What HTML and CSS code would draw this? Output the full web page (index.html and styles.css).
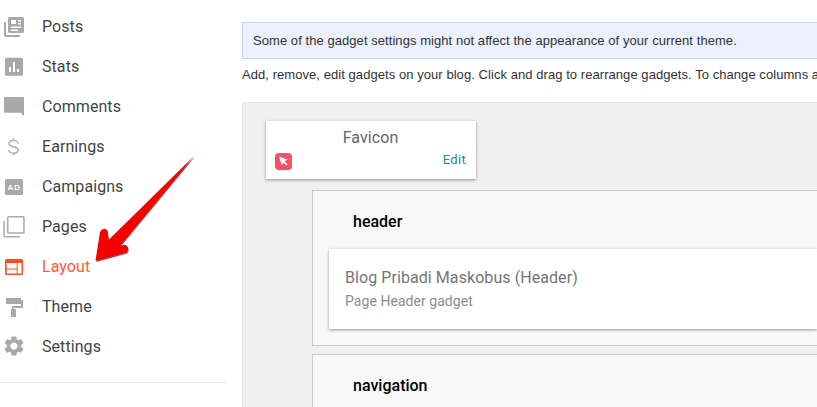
FILE: index.html
```html
<!DOCTYPE html>
<html lang="en">
<head>
  <meta charset="UTF-8" />
  <title>Layout</title>
  <link rel="stylesheet" href="styles.css">
</head>
<body>
  <nav class="sidebar">
    <ul class="menu">
      <li class="menu-item">
        <svg class="icon" viewBox="0 0 24 24"><path d="M7.500 3h13A1.500 1.500 0 0 1 22 4.500v13a1.500 1.500 0 0 1-1.500 1.500h-13A1.500 1.500 0 0 1 6 17.500v-13A1.500 1.500 0 0 1 7.500 3zM9 6v4h5V6zm7 0v1.500h3V6zm0 3v1.500h3V9zm-7 3.500V14h10v-1.500zM9 15.500V17h7v-1.500z" fill-rule="evenodd"/><path d="M2 8h2v12.500c0 .3.200.500.500.500H18v2H4a2 2 0 0 1-2-2z"/></svg>
        <span>Posts</span>
      </li>
      <li class="menu-item">
        <svg class="icon" viewBox="0 0 24 24"><path d="M4.500 3.700h15A1.500 1.500 0 0 1 21 5.200v15a1.500 1.500 0 0 1-1.500 1.500h-15A1.500 1.500 0 0 1 3 20.200v-15a1.500 1.500 0 0 1 1.500-1.500zM7 13v5h2v-5zm4-5v10h2V8zm4 7v3h2v-3z" fill-rule="evenodd"/></svg>
        <span>Stats</span>
      </li>
      <li class="menu-item">
        <svg class="icon" viewBox="0 0 24 24"><path d="M3 3h18a1 1 0 0 1 1 1v18l-3.300-3.300H3a1 1 0 0 1-1-1V4a1 1 0 0 1 1-1z"/></svg>
        <span>Comments</span>
      </li>
      <li class="menu-item">
        <svg class="icon icon-dollar" viewBox="0 0 24 24"><path d="M16 9.500C15.700 7.500 14 6.500 11.500 6.500S7 7.700 7 9.700s2.200 2.700 4.500 3.100 4.800 1.100 4.800 3.200-2.300 3.100-4.800 3.100-4.500-1-4.800-3.100M11.500 4v2.500M11.500 19v2.500"/></svg>
        <span>Earnings</span>
      </li>
      <li class="menu-item">
        <svg class="icon" viewBox="0 0 24 24"><rect x="3" y="5" width="18" height="16" rx="1.500"/><text class="ad-text" x="12.300" y="16">AD</text></svg>
        <span>Campaigns</span>
      </li>
      <li class="menu-item">
        <svg class="icon" viewBox="0 0 24 24"><path d="M6.500 2h14.700a1.500 1.500 0 0 1 1.500 1.500v14.700a1.500 1.500 0 0 1-1.500 1.500H6.500A1.500 1.500 0 0 1 5 18.200V3.500A1.500 1.500 0 0 1 6.500 2zM6.500 3.500v14.700h14.700V3.500z" fill-rule="evenodd"/><path d="M1.300 7h1.500v14.500c0 .3.200.500.500.500h14.700v1.600H3.300a2 2 0 0 1-2-2z"/></svg>
        <span>Pages</span>
      </li>
      <li class="menu-item active">
        <svg class="icon" viewBox="0 0 24 24"><path d="M4.500 5h15A1.500 1.500 0 0 1 21 6.500v13a1.500 1.500 0 0 1-1.500 1.500h-15A1.500 1.500 0 0 1 3 19.500v-13A1.500 1.500 0 0 1 4.500 5zM4.700 9v5.500h10V9zm11 0v10.500h3.800V9zM4.700 15.500v4h10v-4z" fill-rule="evenodd"/></svg>
        <span>Layout</span>
      </li>
      <li class="menu-item">
        <svg class="icon" viewBox="0 0 24 24"><path d="M4.500 4h14a.5.500 0 0 1 .5.500v5a.5.500 0 0 1-.5.500h-14a.5.500 0 0 1-.5-.500v-5a.5.500 0 0 1 .5-.500zM19 6h2v8H11.500v1H14v8H9v-8h.8v-3H19z"/></svg>
        <span>Theme</span>
      </li>
      <li class="menu-item">
        <svg class="icon" viewBox="0 0 24 24"><path d="M19.140 12.940c.04-.3.060-.61.060-.94 0-.32-.02-.64-.07-.94l2.030-1.580c.18-.14.23-.41.12-.61l-1.920-3.320c-.12-.22-.37-.29-.59-.22l-2.390.96c-.5-.38-1.030-.7-1.620-.94l-.36-2.540c-.04-.24-.24-.41-.48-.41h-3.840c-.24 0-.43.170-.47.410l-.36 2.540c-.59.240-1.130.570-1.620.940l-2.390-.96c-.22-.08-.47 0-.59.220L2.740 8.870c-.12.210-.08.470.120.610l2.030 1.580c-.05.300-.09.630-.09.940s.020.640.070.940l-2.030 1.580c-.18.140-.23.410-.12.610l1.920 3.320c.12.220.370.290.590.220l2.390-.96c.5.380 1.030.7 1.620.94l.36 2.540c.050.240.240.410.480.410h3.840c.24 0 .44-.17.470-.41l.36-2.540c.59-.24 1.130-.56 1.620-.94l2.390.96c.22.080.47 0 .59-.22l1.920-3.320c.12-.22.070-.47-.12-.61l-2.010-1.580zM12 15.600c-1.980 0-3.600-1.620-3.600-3.600s1.620-3.600 3.600-3.600 3.600 1.620 3.600 3.600-1.620 3.600-3.600 3.600z"/></svg>
        <span>Settings</span>
      </li>
    </ul>
  </nav>

  <main class="content">
    <div class="notice">Some of the gadget settings might not affect the appearance of your current theme.</div>
    <p class="intro">Add, remove, edit gadgets on your blog. Click and drag to rearrange gadgets. To change columns and widths, use the Template Designer.</p>

    <div class="canvas">
      <div class="card favicon-card">
        <div class="favicon-title">Favicon</div>
        <div class="favicon-foot">
          <svg class="cursor-badge" viewBox="0 0 17 17"><rect width="17" height="17" rx="4" fill="#ee5468"/><path d="M4 3.500l8.500 3.300-3 1.400 3 3-1.300 1.300-3-3-1.400 3z" fill="#fff"/></svg>
          <a class="edit-link">Edit</a>
        </div>
      </div>

      <section class="region">
        <h3 class="region-name">header</h3>
        <div class="card gadget">
          <div class="gadget-title">Blog Pribadi Maskobus (Header)</div>
          <div class="gadget-type">Page Header gadget</div>
        </div>
      </section>

      <section class="region region-last">
        <h3 class="region-name">navigation</h3>
      </section>
    </div>
  </main>

  <!-- annotation drawn over the screenshot -->
  <svg class="arrow" viewBox="0 0 817 407">
    <path d="M95.500 261L100 232Q103 226.500 107 230L108.500 240L194 156L120 245.500L126 245Q129.500 248 126.500 252.500z" fill="#6a0000" transform="translate(.8 1)" opacity=".7"/>
    <path d="M95.500 260.700L100 232Q103 226.500 107 230L108.500 240L194 156L120 245.500L126 245Q129.500 248 126.500 252z" fill="#f60000"/>
  </svg>
</body>
</html>
```

FILE: styles.css
```css
* { box-sizing: border-box; margin: 0; padding: 0; }
html, body { height: 407px; overflow: hidden; }
body {
  display: flex;
  background: #fff;
  font-family: Roboto, sans-serif;
  color: #444;
}

/* sidebar */
.sidebar {
  flex: 0 0 226px;
  height: 383px;
  padding-top: 6px;
  border-bottom: 1px solid #e8e8e8;
}
.menu { list-style: none; }
.menu-item {
  display: flex;
  align-items: center;
  gap: 16px;
  height: 40px;
  padding-left: 2px;
  font-size: 16px;
  letter-spacing: .07px;
}
.icon { width: 24px; height: 24px; fill: #a9a9a9; flex: none; }
.icon-dollar { fill: none; stroke: #b8b8b8; stroke-width: 1.7; }
.ad-text {
  fill: #fff;
  font: bold 8px "Liberation Sans", sans-serif;
  text-anchor: middle;
  letter-spacing: 1px;
}
.menu-item.active { color: #ff5a36; }
.menu-item.active .icon { fill: #fb5027; }

/* main column */
.content {
  flex: 1;
  min-width: 0;
  height: 407px;
  display: flex;
  flex-direction: column;
  margin-left: 16px;
  padding-top: 22px;
  font-family: "Liberation Sans", Arial, sans-serif;
  font-size: 13px;
  letter-spacing: .06px;
}
.notice {
  height: 37px;
  line-height: 35px;
  padding-left: 10px;
  background: #ebf1fe;
  border: 1px solid #c9d5f0;
  border-right: 0;
  color: #333;
}
.intro {
  margin-top: 8px;
  line-height: 15px;
  white-space: nowrap;
  overflow: hidden;
  color: #333;
}
.canvas {
  flex: 1;
  min-height: 0;
  display: flex;
  flex-direction: column;
  margin-top: 20px;
  padding: 18px 0 0 23px;
  background: #f0f0f0;
  border: 1px solid #e6e6e6;
  border-width: 1px 0 0 1px;
  font-family: Roboto, sans-serif;
  letter-spacing: 0;
}

.card {
  background: #fff;
  box-shadow: 0 1px 3px rgba(0,0,0,.4);
}
.favicon-card {
  flex: none;
  width: 210px;
  height: 58px;
  margin-bottom: 11px;
  padding: 7px 10px 0 9px;
}
.favicon-title {
  text-align: center;
  font-size: 16px;
  line-height: 19px;
  letter-spacing: .07px;
  color: #666;
}
.favicon-foot {
  display: flex;
  align-items: flex-start;
  justify-content: space-between;
  margin-top: 6px;
}
.cursor-badge { width: 17px; height: 17px; }
.edit-link { margin-top: -1px; font-size: 13px; line-height: 15px; letter-spacing: .3px; color: #268a96; }

.region {
  flex: none;
  margin: 0 0 8px 46px;
  height: 156px;
  padding: 21px 0 0 16px;
  background: #f8f8f8;
  border: 1px solid #ccc;
  border-right: 0;
}
.region-last {
  flex: 1;
  margin-bottom: 0;
  border-bottom: 0;
}
.region-name {
  padding-left: 24px;
  font-size: 16px;
  font-weight: 500;
  line-height: 19px;
  color: #000;
}
.gadget {
  margin-top: 18px;
  height: 80px;
  padding: 19px 16px 0;
}
.gadget-title { font-size: 16px; line-height: 19px; letter-spacing: .07px; color: #757575; }
.gadget-type { margin-top: 6px; font-size: 14px; line-height: 16px; letter-spacing: .05px; color: #8c8c8c; }

.arrow {
  position: absolute;
  left: 0;
  top: 0;
  width: 817px;
  height: 407px;
  pointer-events: none;
}
```
